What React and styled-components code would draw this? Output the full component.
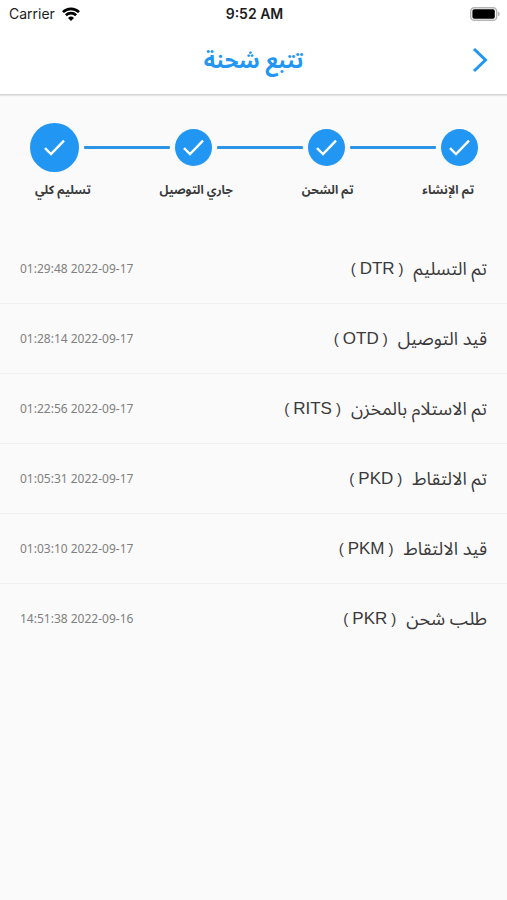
import React from 'react'
import styled, { createGlobalStyle } from 'styled-components'

const GlobalStyle = createGlobalStyle`
  * {
    box-sizing: border-box;
  }

  body {
    margin: 0;
    background: #fafafa;
    color: #3a3a3a;
    font-family: 'Noto Sans Arabic', 'DejaVu Sans Condensed', 'DejaVu Sans', sans-serif;
  }
`

const TopArea = styled.header`
  background: #ffffff;
  border-bottom: 1px solid #d6d6d6;
  box-shadow: 0 1px 1px rgba(0, 0, 0, 0.08);
`

const StatusBar = styled.div`
  display: grid;
  grid-template-columns: 1fr auto 1fr;
  align-items: center;
  height: 27px;
  padding: 0 7px 0 9px;
  color: #1c1c1c;
  font-family: Inter, sans-serif;
  font-size: 14px;
`

const Carrier = styled.div`
  display: flex;
  align-items: center;
  gap: 7px;
`

const Clock = styled.time`
  font-weight: 600;
`

const BatteryIcon = styled.svg`
  justify-self: end;
`

const NavBar = styled.div`
  display: grid;
  grid-template-columns: 36px 1fr 36px;
  align-items: center;
  height: 67px;
  padding: 0 9px;
`

const Title = styled.h1`
  grid-column: 2;
  margin: 0;
  text-align: center;
  color: #2196f3;
  font-size: 22px;
  line-height: 32px;
  font-weight: 700;
`

const BackButton = styled.button`
  display: flex;
  align-items: center;
  justify-content: center;
  width: 36px;
  height: 36px;
  padding: 0;
  border: 0;
  background: none;
  color: #2196f3;
`

const Stepper = styled.section`
  padding: 28px 29px 0 30px;
`

const Track = styled.div`
  display: flex;
  align-items: center;
  gap: 5px;
`

const StepCircle = styled.div`
  display: flex;
  align-items: center;
  justify-content: center;
  flex: none;
  width: ${({ $current }) => ($current ? 49 : 37)}px;
  height: ${({ $current }) => ($current ? 49 : 37)}px;
  border-radius: 50%;
  background: #2196f3;
`

const StepLine = styled.div`
  flex: 1;
  height: 3px;
  border-radius: 1px;
  background: #2c93e6;
`

const StepLabels = styled.div`
  display: flex;
  justify-content: space-between;
  padding: 9px 4px 0 5px;
  font-size: 12px;
  line-height: 20px;
  font-weight: 700;
`

const EventList = styled.ul`
  margin: 0;
  padding: 33px 0 0;
  list-style: none;
`

const EventRow = styled.li`
  display: flex;
  align-items: center;
  justify-content: space-between;
  height: 70px;
  padding: 0 20px;
  border-bottom: 1px solid #f1f1f1;

  &:last-child {
    border-bottom-color: transparent;
  }
`

const EventName = styled.div`
  display: flex;
  align-items: center;
  gap: 10px;
  font-size: 18px;
  line-height: 24px;
`

const EventCode = styled.span`
  display: flex;
  align-items: center;
  gap: 4px;
  font-family: 'Liberation Sans', sans-serif;
  font-size: 17px;
`

const Paren = styled.span`
  font-size: 15px;
`

const EventDate = styled.time`
  color: #808080;
  font-family: 'Noto Sans', sans-serif;
  font-size: 12px;
  line-height: 20px;
`

const steps = ['تم الإنشاء', 'تم الشحن', 'جاري التوصيل', 'تسليم كلي']

const events = [
  { name: 'تم التسليم', code: 'DTR', date: '01:29:48 2022-09-17' },
  { name: 'قيد التوصيل', code: 'OTD', date: '01:28:14 2022-09-17' },
  { name: 'تم الاستلام بالمخزن', code: 'RITS', date: '01:22:56 2022-09-17' },
  { name: 'تم الالتقاط', code: 'PKD', date: '01:05:31 2022-09-17' },
  { name: 'قيد الالتقاط', code: 'PKM', date: '01:03:10 2022-09-17' },
  { name: 'طلب شحن', code: 'PKR', date: '14:51:38 2022-09-16' },
]

function Wifi() {
  return (
    <svg width="18" height="14" viewBox="0 0 18 14" fill="none" stroke="#000" strokeWidth="2.7">
      <path d="M1 5.1a11.4 11.4 0 0 1 16 0" />
      <path d="M3.9 8.2a7.3 7.3 0 0 1 10.2 0" />
      <path d="M9 13.9L6 10.9a4.3 4.3 0 0 1 6 0z" fill="#000" stroke="none" />
    </svg>
  )
}

function Battery() {
  return (
    <BatteryIcon width="30" height="14" viewBox="0 0 30 14">
      <rect x="0.7" y="0.7" width="26" height="12.6" rx="3.6" fill="#fff" stroke="#b4b4b4" strokeWidth="1.4" />
      <rect x="2.4" y="2.3" width="22.4" height="9.4" rx="1.8" fill="#000" />
      <path d="M28 4.8c1.1.4 1.7 1.2 1.7 2.2s-.6 1.8-1.7 2.2z" fill="#b4b4b4" />
    </BatteryIcon>
  )
}

function Check() {
  return (
    <svg width="21" height="17" viewBox="0 0 21 17" fill="none" stroke="#fff" strokeWidth="2.4">
      <path d="M1 9.2l6 5.9L20 1.7" />
    </svg>
  )
}

function App() {
  return (
    <>
      <GlobalStyle />
      <TopArea>
        <StatusBar>
          <Carrier>
            Carrier
            <Wifi />
          </Carrier>
          <Clock>9:52 AM</Clock>
          <Battery />
        </StatusBar>
        <NavBar>
          <Title dir="rtl" lang="ar">تتبع شحنة</Title>
          <BackButton type="button" aria-label="رجوع">
            <svg width="16" height="26" viewBox="0 0 16 26" fill="none" stroke="currentColor" strokeWidth="3">
              <path d="M2 1l11.500 11L2 23" />
            </svg>
          </BackButton>
        </NavBar>
      </TopArea>

      <main dir="rtl" lang="ar">
        <Stepper>
          <Track>
            {steps.map((step, index) => (
              <React.Fragment key={step}>
                {index > 0 && <StepLine />}
                <StepCircle $current={index === steps.length - 1}>
                  <Check />
                </StepCircle>
              </React.Fragment>
            ))}
          </Track>
          <StepLabels>
            {steps.map(step => (
              <span key={step}>{step}</span>
            ))}
          </StepLabels>
        </Stepper>

        <EventList>
          {events.map(({ name, code, date }) => (
            <EventRow key={code}>
              <EventName>
                {name}
                <EventCode dir="ltr">
                  <Paren>(</Paren>
                  {code}
                  <Paren>)</Paren>
                </EventCode>
              </EventName>
              <EventDate dir="ltr">{date}</EventDate>
            </EventRow>
          ))}
        </EventList>
      </main>
    </>
  )
}

export default App
